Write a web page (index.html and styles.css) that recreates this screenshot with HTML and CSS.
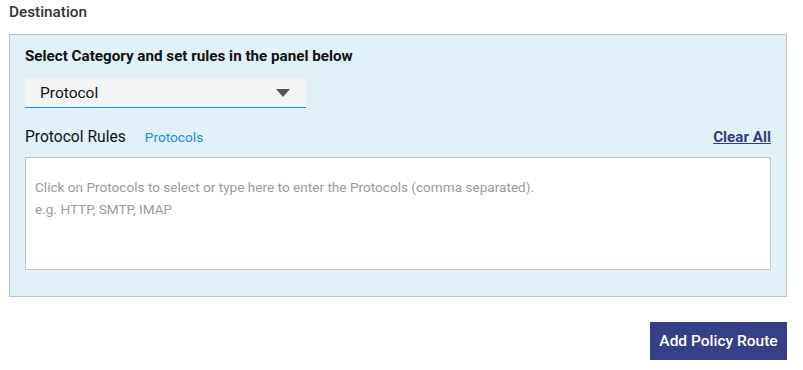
FILE: index.html
```html
<!DOCTYPE html>
<html>
<head>
<meta charset="utf-8">
<link rel="stylesheet" href="styles.css">
</head>
<body>
<div class="page">
  <div class="section-title">Destination</div>
  <div class="panel">
    <div class="panel-title">Select Category and set rules in the panel below</div>
    <div class="select">
      <span class="select-value">Protocol</span>
      <svg class="caret" width="14" height="8" viewBox="0 0 14 8"><path d="M0 0H14L7 8Z" fill="#555"/></svg>
    </div>
    <div class="rules-head">
      <span class="rules-label">Protocol Rules</span>
      <span class="rules-link">Protocols</span>
      <span class="clear-all">Clear All</span>
    </div>
    <div class="rules-box">
      <div class="ph">Click on Protocols to select or type here to enter the Protocols (comma separated).</div>
      <div class="ph">e.g. HTTP, SMTP, IMAP</div>
    </div>
  </div>
  <div class="actions">
    <button class="btn-primary">Add Policy Route</button>
  </div>
</div>
</body>
</html>
```

FILE: styles.css
```css
* { box-sizing: border-box; }
html, body { margin: 0; padding: 0; background: #fff; }
body { font-family: Roboto, "Noto Sans", Arial, sans-serif; color: #222; }
.page { width: 778px; margin-left: 9px; padding-top: 3px; }
.section-title { font-size: 15.3px; font-weight: 500; color: #333; line-height: 18px; height: 31px; }
.panel { background: #e2f1f8; border: 1px solid #c2c2c2; height: 263px; padding: 11px 15px 0 15px; }
.panel-title { font-size: 15.2px; font-weight: 700; color: #111; line-height: 20px; height: 32px; }
.select { width: 281px; height: 30px; background: #f4f4f4; border-bottom: 1.5px solid #1a96c8; display: flex; align-items: center; justify-content: space-between; padding: 0 16px 0 15px; }
.select-value { font-size: 15.5px; color: #111; }
.caret { display: block; margin-top: 1px; }
.rules-head { display: flex; align-items: center; height: 20px; margin-top: 19px; }
.rules-label { font-size: 15.6px; color: #111; }
.rules-link { font-size: 13.7px; color: #1a8cf0; margin-left: 19px; }
.clear-all { margin-left: auto; font-size: 15.2px; font-weight: 700; color: #363c84; text-decoration: underline; }
.rules-box { margin-top: 10px; height: 113px; background: #fff; border: 1px solid #c4c4c4; padding: 18px 9px; }
.ph { font-size: 13.6px; color: #9a9a9a; line-height: 22px; }
.actions { display: flex; justify-content: flex-end; margin-top: 25px; }
.btn-primary { border: 0; background: #373f88; color: #fff; font-family: Roboto, Arial, sans-serif; font-size: 15.5px; font-weight: 500; height: 38px; width: 137px; padding: 0; }
```
